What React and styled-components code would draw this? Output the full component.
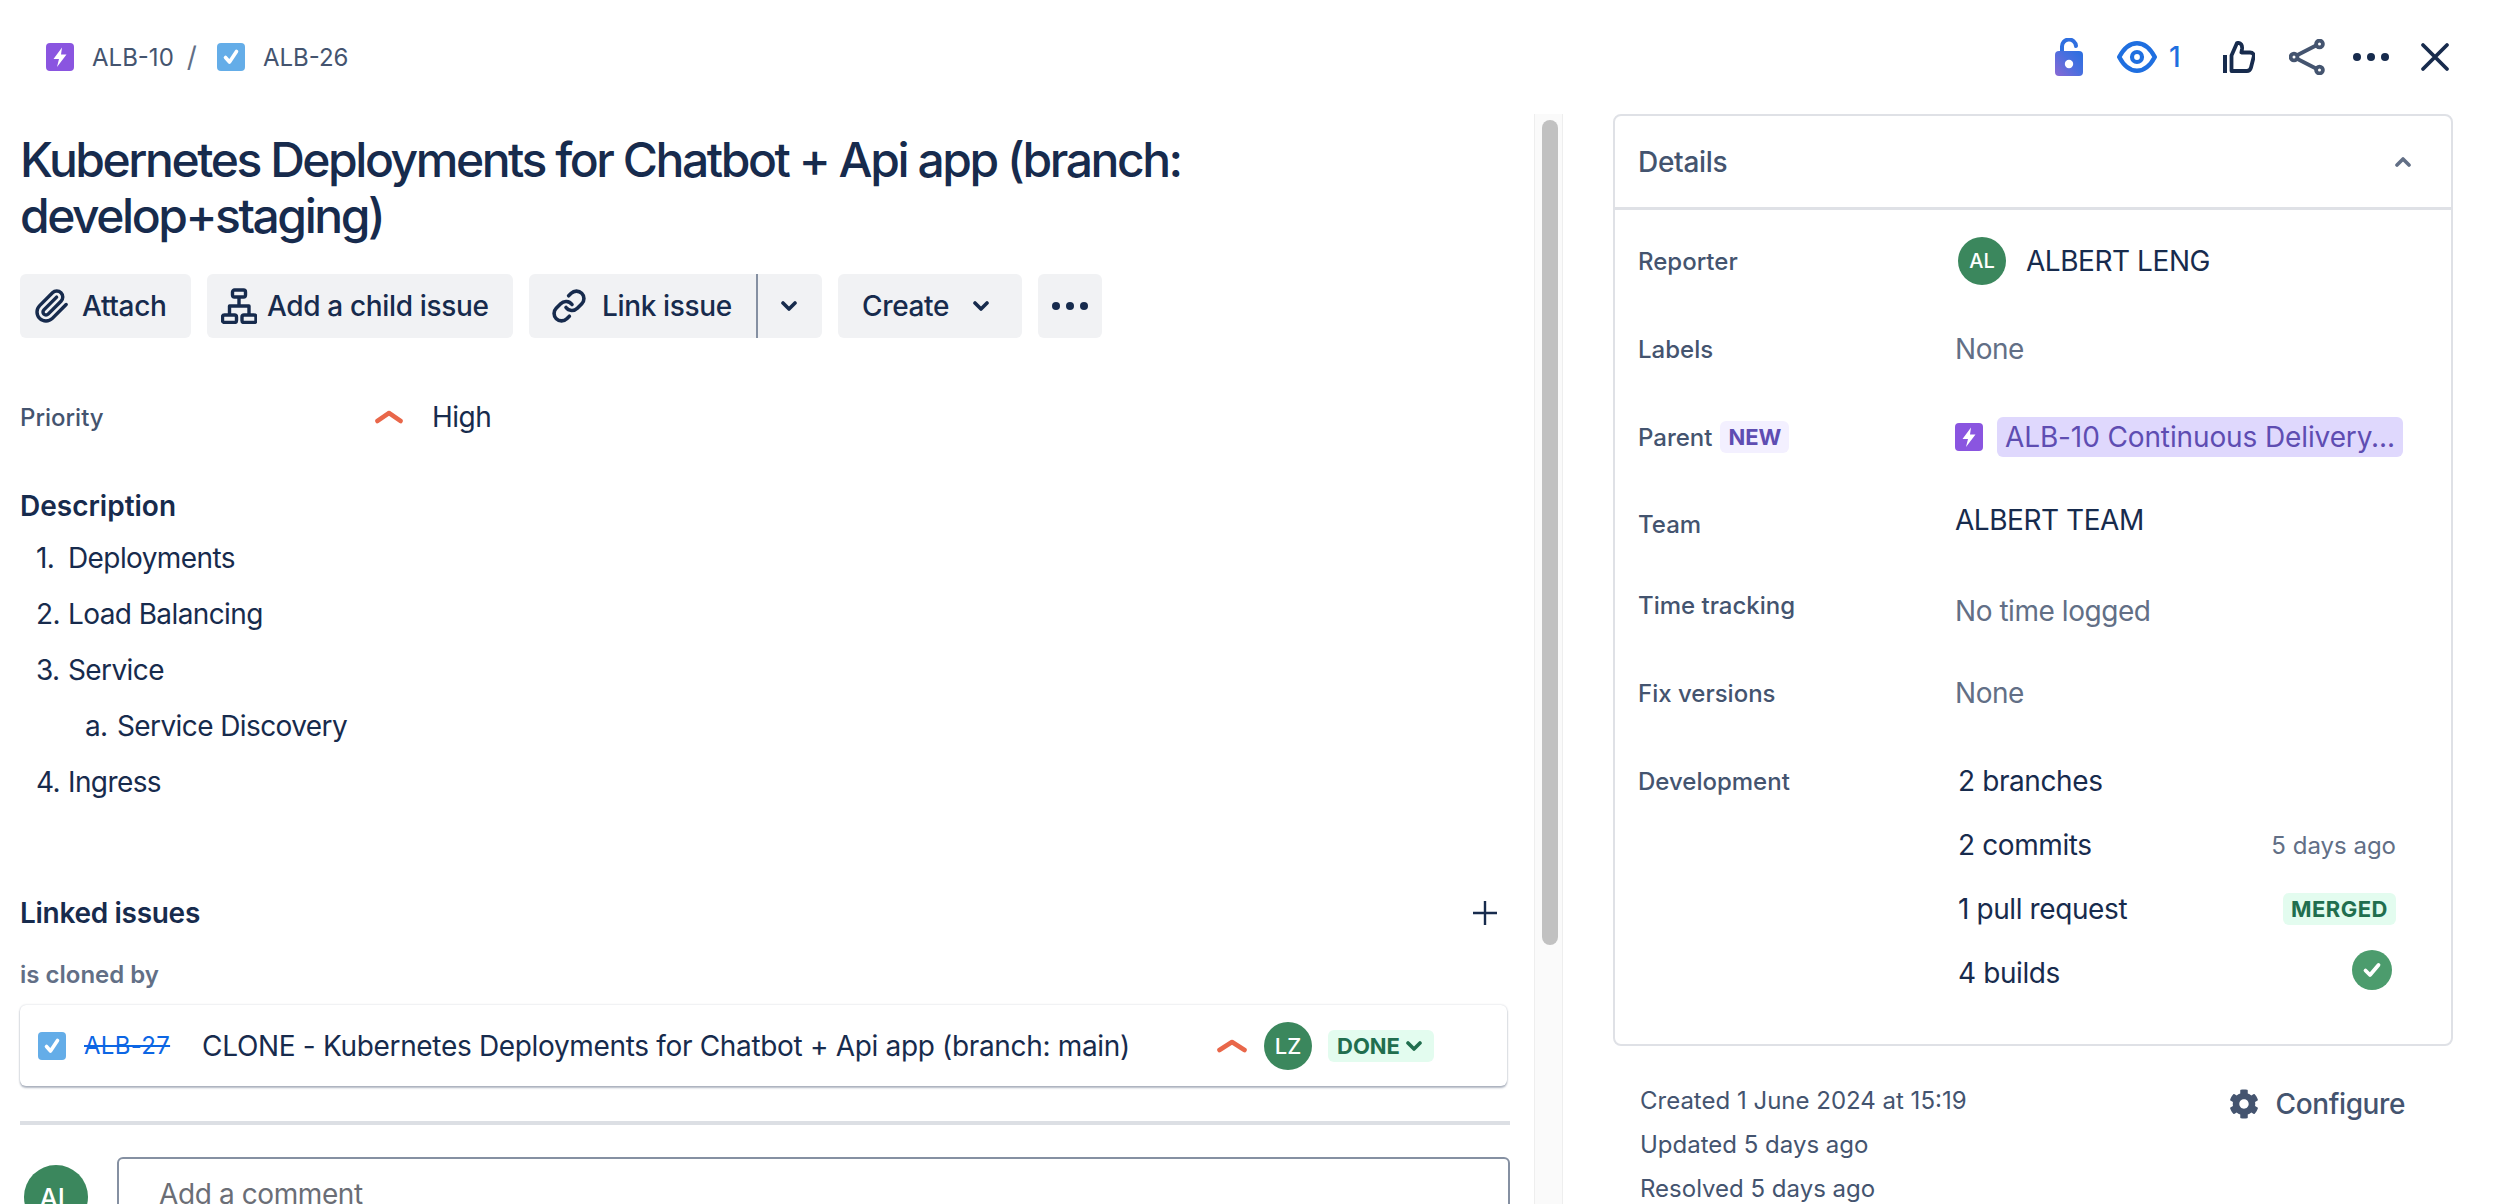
import React from "react";
import styled, { createGlobalStyle } from "styled-components";
import { FaCog } from "react-icons/fa";

const Global = createGlobalStyle`
  html, body { margin: 0; padding: 0; background: #fff; }
  body { font-family: Inter, "Noto Sans", sans-serif; color: #172b4d; }
  * { box-sizing: border-box; }
`;

const Page = styled.div`
  width: 2496px;
  height: 1204px;
  overflow: hidden;
  display: flex;
  flex-direction: column;
  background: #fff;
`;
const TopBar = styled.header`
  height: 114px;
  flex: none;
  display: flex;
  align-items: center;
  padding: 0 46px 0 46px;
`;
const Crumbs = styled.nav`
  display: flex;
  align-items: center;
  font-size: 24px;
  color: #44546f;
`;
const CrumbText = styled.span`
  margin-left: 18px;
`;
const Slash = styled.span`
  margin: 0 20px 0 13px;
  font-size: 28px;
  color: #626f86;
`;
const Actions = styled.div`
  margin-left: auto;
  display: flex;
  align-items: center;
`;
const WatchCount = styled.span`
  font-size: 28px;
  font-weight: 500;
  color: #1f6fe0;
  margin-left: 12px;
  width: 12px;
  line-height: 34px;
`;
const Main = styled.div`
  flex: 1;
  min-height: 0;
  display: flex;
`;
const Left = styled.main`
  width: 1534px;
  flex: none;
  padding: 18px 24px 0 20px;
  overflow: hidden;
`;
const Track = styled.div`
  width: 29px;
  flex: none;
  background: #fafafa;
  border-left: 1px solid #eeeeee;
  border-right: 1px solid #eeeeee;
  padding: 6px 5px 0 7px;
`;
const Thumb = styled.div`
  width: 16px;
  height: 825px;
  border-radius: 8px;
  background: #c1c1c1;
`;
const Right = styled.aside`
  width: 840px;
  margin-left: 50px;
  flex: none;
`;
const Title = styled.h1`
  margin: 0;
  font-size: 48px;
  line-height: 56px;
  font-weight: 500;
  letter-spacing: -2.45px;
  color: #172b4d;
  width: 1300px;
`;
const Toolbar = styled.div`
  display: flex;
  gap: 16px;
  margin-top: 30px;
`;
const Btn = styled.div`
  height: 64px;
  width: ${(p) => p.$w}px;
  flex: none;
  display: flex;
  align-items: center;
  gap: ${(p) => p.$gap || 12}px;
  padding: 0 0 0 ${(p) => p.$pl ?? 14}px;
  background: #f1f2f4;
  border-radius: 6px;
  font-size: 28px;
  font-weight: 500;
  letter-spacing: -0.35px;
  color: #172b4d;
  white-space: nowrap;
`;
const SplitDivider = styled.div`
  width: 2px;
  height: 64px;
  background: #8590a2;
  margin-left: 9px;
`;
const PriorityRow = styled.div`
  display: flex;
  align-items: center;
  margin-top: 50px;
  height: 58px;
`;
const FieldLabel = styled.span`
  font-size: 24px;
  font-weight: 500;
  color: #44546f;
  width: 355px;
`;
const PriorityValue = styled.span`
  font-size: 28px;
  letter-spacing: -0.5px;
  margin-left: 29px;
  color: #172b4d;
`;
const SectionHead = styled.h2`
  margin: ${(p) => p.$mt}px 0 0;
  font-size: 28px;
  line-height: 40px;
  font-weight: 600;
  color: #172b4d;
`;
const DescList = styled.div`
  margin-top: 4px;
`;
const ListItem = styled.div`
  display: flex;
  height: 56px;
  align-items: center;
  font-size: 28px;
  letter-spacing: -0.6px;
  color: #172b4d;
  padding-left: ${(p) => (p.$sub ? 65 : 16)}px;
`;
const ListMark = styled.span`
  width: 32px;
  flex: none;
`;
const LinkedHead = styled.div`
  display: flex;
  align-items: center;
  justify-content: space-between;
  margin-top: 83px;
  height: 40px;
  padding-right: 12px;
`;
const LinkedTitle = styled.h2`
  margin: 0;
  font-size: 28px;
  font-weight: 600;
  letter-spacing: -0.3px;
  color: #172b4d;
`;
const RelationLabel = styled.div`
  margin-top: 26px;
  font-size: 24px;
  line-height: 32px;
  font-weight: 600;
  color: #626f86;
`;
const LinkedCard = styled.div`
  width: 1487px;
  height: 81px;
  margin-top: 14px;
  display: flex;
  align-items: center;
  padding: 0 73px 0 18px;
  border-radius: 6px;
  background: #fff;
  box-shadow: 0 2px 2px rgba(9, 30, 66, 0.3), 0 0 2px rgba(9, 30, 66, 0.22);
`;
const IssueKey = styled.span`
  font-size: 24px;
  color: #0c66e4;
  text-decoration: line-through;
  margin-left: 18px;
  letter-spacing: 0.3px;
`;
const IssueTitle = styled.span`
  font-size: 28px;
  letter-spacing: -0.33px;
  margin-left: 32px;
  flex: 1;
  color: #172b4d;
`;
const Avatar = styled.div`
  width: ${(p) => p.$size || 48}px;
  height: ${(p) => p.$size || 48}px;
  margin-left: ${(p) => p.$ml || 0}px;
  border-radius: 50%;
  flex: none;
  background: #3b875d;
  color: #fff;
  display: flex;
  align-items: center;
  justify-content: center;
  font-size: ${(p) => p.$font || 20}px;
  font-weight: 500;
`;
const Lozenge = styled.span`
  display: inline-flex;
  align-items: center;
  gap: ${(p) => p.$gap || 0}px;
  height: 32px;
  margin-left: ${(p) => p.$ml || 0}px;
  padding: 0 ${(p) => p.$pr || 8}px 0 ${(p) => p.$pl || 8}px;
  border-radius: 6px;
  background: #e3fcef;
  color: #216e4e;
  font-size: 22px;
  font-weight: 700;
  letter-spacing: ${(p) => p.$ls || 0}px;
`;
const Divider = styled.div`
  width: 1490px;
  height: 4px;
  margin-top: 35px;
  background: #dcdfe4;
`;
const CommentRow = styled.div`
  display: flex;
  margin-top: 32px;
  width: 1490px;
`;
const CommentAvatarWrap = styled.div`
  width: 97px;
  padding: 8px 0 0 4px;
  flex: none;
`;
const CommentBox = styled.div`
  flex: 1;
  height: 100px;
  border: 2px solid #8590a2;
  border-radius: 6px;
  padding: 18px 40px;
  font-size: 28px;
  letter-spacing: -0.4px;
  color: #6b6e76;
`;
const Card = styled.section`
  width: 840px;
  height: 932px;
  border: 2px solid #dfe1e6;
  border-radius: 8px;
  background: #fff;
`;
const CardHead = styled.div`
  height: 94px;
  border-bottom: 3px solid #dfe1e6;
  display: flex;
  align-items: center;
  justify-content: space-between;
  padding: 0 40px 0 23px;
  font-size: 28px;
  font-weight: 500;
  letter-spacing: -0.3px;
  color: #44546f;
`;
const Row = styled.div`
  height: ${(p) => p.$h}px;
  display: flex;
  align-items: center;
  padding: ${(p) => p.$pt || 0}px 0 0 23px;
`;
const RowLabel = styled.span`
  width: 317px;
  flex: none;
  display: flex;
  align-items: center;
  gap: 8px;
  font-size: 24px;
  font-weight: 500;
  color: #44546f;
`;
const ValueText = styled.span`
  font-size: 28px;
  letter-spacing: -0.45px;
  color: ${(p) => (p.$muted ? "#626f86" : "#172b4d")};
  margin-left: ${(p) => p.$ml || 0}px;
  margin-top: ${(p) => p.$mt || 0}px;
`;
const NewBadge = styled.span`
  height: 32px;
  padding: 0 8px;
  display: inline-flex;
  align-items: center;
  border-radius: 6px;
  background: #f3f0ff;
  color: #5e4db2;
  font-size: 22px;
  font-weight: 700;
`;
const ParentPill = styled.span`
  margin-left: 14px;
  width: 406px;
  height: 40px;
  padding: 0 8px;
  display: flex;
  align-items: center;
  border-radius: 6px;
  background: #dfd8fd;
  color: #5e4db2;
  font-size: 28px;
  letter-spacing: -0.12px;
  white-space: nowrap;
`;
const DevBlock = styled.div`
  display: flex;
  padding: 8px 0 0 23px;
`;
const DevLabel = styled(RowLabel)`
  height: 64px;
`;
const DevList = styled.div`
  width: 441px;
  padding-left: 3px;
`;
const DevRow = styled.div`
  height: 64px;
  display: flex;
  align-items: center;
  justify-content: space-between;
  font-size: 28px;
  letter-spacing: -0.4px;
  color: #172b4d;
`;
const DevTime = styled.span`
  font-size: 24px;
  letter-spacing: 0;
  color: #626f86;
`;
const CheckWrap = styled.span`
  display: flex;
  margin: -6px 4px 0 0;
`;
const Footer = styled.div`
  display: flex;
  justify-content: space-between;
  padding: 33px 48px 0 27px;
`;
const Meta = styled.div`
  font-size: 24px;
  line-height: 44px;
  color: #44546f;
`;
const ConfigureBtn = styled.div`
  display: flex;
  align-items: center;
  gap: 17px;
  height: 48px;
  margin-top: 1px;
  font-size: 28px;
  font-weight: 500;
  letter-spacing: -0.4px;
  color: #44546f;
`;

const Svg = styled.svg`
  display: block;
  flex: none;
  margin-left: ${(p) => p.$ml || 0}px;
`;

const EpicIcon = () => (
  <Svg width="28" height="28" viewBox="0 0 28 28">
    <rect width="28" height="28" rx="4" fill="#8a55e0" />
    <path d="M16 4.5 7.5 16h5.5L11 24l9.5-12.5H15z" fill="#fff" />
  </Svg>
);
const TaskIcon = () => (
  <Svg width="28" height="28" viewBox="0 0 28 28">
    <rect width="28" height="28" rx="4" fill="#64ade8" />
    <path d="M8.5 14.5 12.5 19 19.5 8.5" fill="none" stroke="#fff" strokeWidth="3.6" strokeLinecap="round" strokeLinejoin="round" />
  </Svg>
);
const LockIcon = () => (
  <Svg width="28" height="38" viewBox="0 0 28 38">
    <defs>
      <linearGradient id="lockGrad" x1="0" y1="1" x2="1" y2="0.2">
        <stop offset="0" stopColor="#8a68d4" />
        <stop offset="0.6" stopColor="#4a6fdf" />
        <stop offset="1" stopColor="#2f6fe0" />
      </linearGradient>
    </defs>
    <path d="M7 15V9a7 7 0 0 1 14 -1" fill="none" stroke="#2f6fe0" strokeWidth="4" strokeLinecap="round" />
    <rect y="13" width="28" height="25" rx="4" fill="url(#lockGrad)" />
    <circle cx="14" cy="26" r="4.2" fill="#fff" />
  </Svg>
);
const EyeIcon = () => (
  <Svg width="40" height="32" viewBox="0 0 40 32" $ml={34}>
    <path d="M2.2 16C7 7 13 2.2 20 2.2S33 7 37.8 16C33 25 27 29.8 20 29.8S7 25 2.2 16Z" fill="none" stroke="#1f6fe0" strokeWidth="4.4" strokeLinejoin="round" />
    <circle cx="20" cy="16" r="5" fill="none" stroke="#1f6fe0" strokeWidth="4.2" />
  </Svg>
);
const ThumbIcon = () => (
  <Svg width="32" height="32" viewBox="0 0 32 32" $ml={42}>
    <rect x="0" y="14" width="4" height="18" fill="#172b4d" />
    <path d="M8.5 30V14.5L14 2c4-.8 5.5 2.6 5 6l-.6 3.5H27c3 0 4.4 2 3.6 4.7L28 26.5c-.6 2.2-2 3.5-4.2 3.5Z" fill="none" stroke="#172b4d" strokeWidth="3.8" strokeLinejoin="round" />
  </Svg>
);
const ShareIcon = () => (
  <Svg width="36" height="36" viewBox="0 0 36 36" $ml={34}>
    <g fill="none" stroke="#44546f" strokeWidth="3.8">
      <circle cx="5" cy="18" r="3.4" />
      <circle cx="30.5" cy="5" r="3.4" />
      <circle cx="30.5" cy="31" r="3.4" />
      <path d="M8.5 16 27 6.5M8.5 20 27 29.5" />
    </g>
  </Svg>
);
const DotsIcon = ({ ml = 28 }) => (
  <Svg width="36" height="10" viewBox="0 0 36 10" $ml={ml}>
    <g fill="#172b4d">
      <circle cx="4" cy="5" r="4" />
      <circle cx="18" cy="5" r="4" />
      <circle cx="32" cy="5" r="4" />
    </g>
  </Svg>
);
const CloseIcon = () => (
  <Svg width="30" height="30" viewBox="0 0 30 30" $ml={31}>
    <path d="M3 3 27 27M27 3 3 27" stroke="#172b4d" strokeWidth="3.8" strokeLinecap="round" />
  </Svg>
);
const Chevron = ({ up, size = 16, color = "#172b4d", ml, sw = 3.6 }) => (
  <Svg width={size} height={size} viewBox="0 0 16 16" $ml={ml}>
    <path d={up ? "M2 11 8 5l6 6" : "M2 5l6 6 6-6"} fill="none" stroke={color} strokeWidth={sw} strokeLinecap="round" strokeLinejoin="round" />
  </Svg>
);
const PriorityIcon = ({ w = 30 }) => (
  <Svg width={w} height="14" viewBox="0 0 30 14" preserveAspectRatio="none">
    <path d="M2.5 11 15 3l12.5 8" fill="none" stroke="#e9674a" strokeWidth="4.6" strokeLinecap="round" strokeLinejoin="round" />
  </Svg>
);
const ClipIcon = () => (
  <Svg width="36" height="36" viewBox="0 0 24 24">
    <path d="m21.44 11.05-9.19 9.19a6 6 0 0 1-8.49-8.49l8.57-8.57A4 4 0 1 1 18 8.84l-8.59 8.57a2 2 0 0 1-2.83-2.83l8.49-8.48" fill="none" stroke="#172b4d" strokeWidth="2.3" strokeLinecap="round" strokeLinejoin="round" />
  </Svg>
);
const TreeIcon = () => (
  <Svg width="36" height="36" viewBox="0 0 36 36">
    <g fill="none" stroke="#172b4d" strokeWidth="3.4" strokeLinejoin="round">
      <rect x="11.5" y="2" width="13" height="7" rx="2" />
      <rect x="1.5" y="27" width="14" height="7.5" rx="2" />
      <rect x="21" y="27" width="14" height="7.5" rx="2" />
      <path d="M18 9v9M8.5 27v-9h19.5v9" />
    </g>
  </Svg>
);
const LinkIcon = () => (
  <Svg width="36" height="36" viewBox="0 0 24 24">
    <g fill="none" stroke="#172b4d" strokeWidth="2.4" strokeLinecap="round" strokeLinejoin="round">
      <path d="M10 13a5 5 0 0 0 7.54.54l3-3a5 5 0 0 0-7.07-7.07l-1.72 1.71" />
      <path d="M14 11a5 5 0 0 0-7.54-.54l-3 3a5 5 0 0 0 7.07 7.07l1.71-1.71" />
    </g>
  </Svg>
);
const PlusIcon = () => (
  <Svg width="26" height="26" viewBox="0 0 26 26">
    <path d="M13 1v24M1 13h24" stroke="#172b4d" strokeWidth="2.4" />
  </Svg>
);
const BuildCheck = () => (
  <Svg width="40" height="40" viewBox="0 0 40 40">
    <circle cx="20" cy="20" r="20" fill="#4c9c6d" />
    <path d="M13.5 20.5 18 25 26.5 15" fill="none" stroke="#fff" strokeWidth="3.8" strokeLinecap="round" strokeLinejoin="round" />
  </Svg>
);

export default function App() {
  return (
    <Page>
      <Global />
      <TopBar>
        <Crumbs>
          <EpicIcon />
          <CrumbText>ALB-10</CrumbText>
          <Slash>/</Slash>
          <TaskIcon />
          <CrumbText>ALB-26</CrumbText>
        </Crumbs>
        <Actions>
          <LockIcon />
          <EyeIcon />
          <WatchCount>1</WatchCount>
          <ThumbIcon />
          <ShareIcon />
          <DotsIcon />
          <CloseIcon />
        </Actions>
      </TopBar>
      <Main>
        <Left>
          <Title>Kubernetes Deployments for Chatbot + Api app (branch: develop+staging)</Title>
          <Toolbar>
            <Btn $w={171} $gap={12}>
              <ClipIcon />
              Attach
            </Btn>
            <Btn $w={306} $gap={10}>
              <TreeIcon />
              Add a child issue
            </Btn>
            <Btn $w={293} $gap={15} $pl={22}>
              <LinkIcon />
              Link issue
              <SplitDivider />
              <Chevron ml={8} />
            </Btn>
            <Btn $w={184} $pl={24} $gap={24}>
              Create
              <Chevron />
            </Btn>
            <Btn $w={64} $pl={14}>
              <DotsIcon ml={0} />
            </Btn>
          </Toolbar>
          <PriorityRow>
            <FieldLabel>Priority</FieldLabel>
            <PriorityIcon w={28} />
            <PriorityValue>High</PriorityValue>
          </PriorityRow>
          <SectionHead $mt={40}>Description</SectionHead>
          <DescList>
            <ListItem><ListMark>1.</ListMark>Deployments</ListItem>
            <ListItem><ListMark>2.</ListMark>Load Balancing</ListItem>
            <ListItem><ListMark>3.</ListMark>Service</ListItem>
            <ListItem $sub><ListMark>a.</ListMark>Service Discovery</ListItem>
            <ListItem><ListMark>4.</ListMark>Ingress</ListItem>
          </DescList>
          <LinkedHead>
            <LinkedTitle>Linked issues</LinkedTitle>
            <PlusIcon />
          </LinkedHead>
          <RelationLabel>is cloned by</RelationLabel>
          <LinkedCard>
            <TaskIcon />
            <IssueKey>ALB-27</IssueKey>
            <IssueTitle>CLONE - Kubernetes Deployments for Chatbot + Api app (branch: main)</IssueTitle>
            <PriorityIcon />
            <Avatar $ml={17} $font={22}>LZ</Avatar>
            <Lozenge $ml={16} $pl={9} $pr={12} $gap={6}>
              DONE
              <Chevron size={16} color="#216e4e" />
            </Lozenge>
          </LinkedCard>
          <Divider />
          <CommentRow>
            <CommentAvatarWrap>
              <Avatar $size={64} $font={26}>AL</Avatar>
            </CommentAvatarWrap>
            <CommentBox>Add a comment</CommentBox>
          </CommentRow>
        </Left>
        <Track>
          <Thumb />
        </Track>
        <Right>
          <Card>
            <CardHead>
              Details
              <Chevron up size={16} color="#626f86" />
            </CardHead>
            <Row $h={97} $pt={5}>
              <RowLabel>Reporter</RowLabel>
              <Avatar $ml={3}>AL</Avatar>
              <ValueText $ml={20}>ALBERT LENG</ValueText>
            </Row>
            <Row $h={84}>
              <RowLabel>Labels</RowLabel>
              <ValueText $muted>None</ValueText>
            </Row>
            <Row $h={92}>
              <RowLabel>
                Parent
                <NewBadge>NEW</NewBadge>
              </RowLabel>
              <EpicIcon />
              <ParentPill>ALB-10 Continuous Delivery...</ParentPill>
            </Row>
            <Row $h={82}>
              <RowLabel>Team</RowLabel>
              <ValueText $mt={-8}>ALBERT TEAM</ValueText>
            </Row>
            <Row $h={80}>
              <RowLabel>Time tracking</RowLabel>
              <ValueText $muted $mt={12}>No time logged</ValueText>
            </Row>
            <Row $h={96}>
              <RowLabel>Fix versions</RowLabel>
              <ValueText $muted>None</ValueText>
            </Row>
            <DevBlock>
              <DevLabel>Development</DevLabel>
              <DevList>
                <DevRow>2 branches</DevRow>
                <DevRow>
                  2 commits
                  <DevTime>5 days ago</DevTime>
                </DevRow>
                <DevRow>
                  1 pull request
                  <Lozenge $ls={0.5}>MERGED</Lozenge>
                </DevRow>
                <DevRow>
                  4 builds
                  <CheckWrap>
                    <BuildCheck />
                  </CheckWrap>
                </DevRow>
              </DevList>
            </DevBlock>
          </Card>
          <Footer>
            <Meta>
              <div>Created 1 June 2024 at 15:19</div>
              <div>Updated 5 days ago</div>
              <div>Resolved 5 days ago</div>
            </Meta>
            <ConfigureBtn>
              <FaCog size={30} />
              Configure
            </ConfigureBtn>
          </Footer>
        </Right>
      </Main>
    </Page>
  );
}
